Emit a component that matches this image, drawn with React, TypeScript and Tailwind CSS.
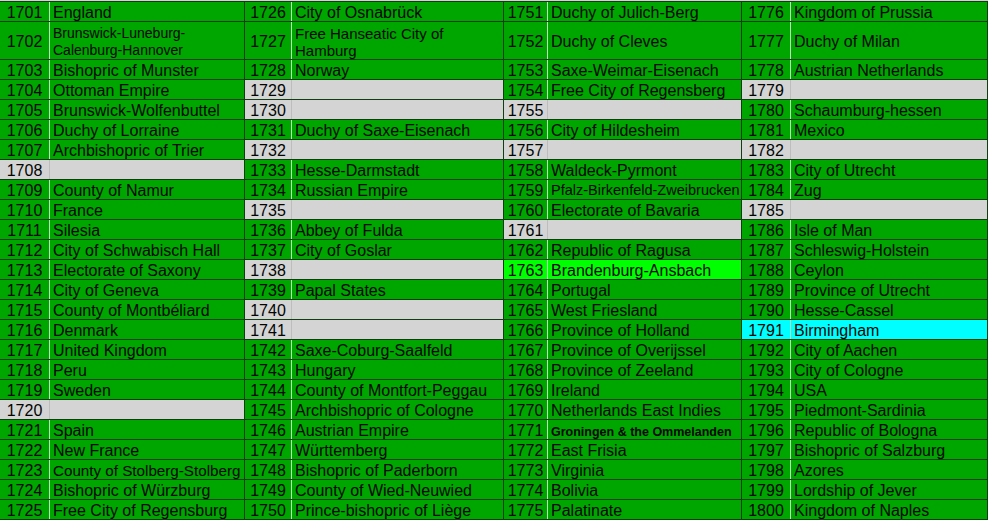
import clsx from "clsx"

type Fill = "green" | "gray" | "lime" | "cyan"

interface Entry {
  year: number
  name?: string | string[]
  fill?: Fill
  text?: string
}

interface Group {
  yearWidth: string
  width: string
  entries: Entry[]
}

const fillClass: Record<Fill, string> = {
  green: "bg-[#00a600]",
  gray: "bg-[#d4d4d4]",
  lime: "bg-[#00ff00]",
  cyan: "bg-[#00ffff]",
}

const groups: Group[] = [
  {
    width: "w-[245px]",
    yearWidth: "w-[50px]",
    entries: [
      { year: 1701, name: "England" },
      { year: 1702, name: ["Brunswick-Luneburg-", "Calenburg-Hannover"], text: "text-[14px] leading-[17px]" },
      { year: 1703, name: "Bishopric of Munster" },
      { year: 1704, name: "Ottoman Empire" },
      { year: 1705, name: "Brunswick-Wolfenbuttel" },
      { year: 1706, name: "Duchy of Lorraine" },
      { year: 1707, name: "Archbishopric of Trier" },
      { year: 1708 },
      { year: 1709, name: "County of Namur" },
      { year: 1710, name: "France" },
      { year: 1711, name: "Silesia" },
      { year: 1712, name: "City of Schwabisch Hall" },
      { year: 1713, name: "Electorate of Saxony" },
      { year: 1714, name: "City of Geneva" },
      { year: 1715, name: "County of Montbéliard" },
      { year: 1716, name: "Denmark" },
      { year: 1717, name: "United Kingdom" },
      { year: 1718, name: "Peru" },
      { year: 1719, name: "Sweden" },
      { year: 1720 },
      { year: 1721, name: "Spain" },
      { year: 1722, name: "New France" },
      { year: 1723, name: "County of Stolberg-Stolberg", text: "text-[15.2px] leading-[19px]" },
      { year: 1724, name: "Bishopric of Würzburg" },
      { year: 1725, name: "Free City of Regensburg" },
    ],
  },
  {
    width: "w-[259px]",
    yearWidth: "w-[47px]",
    entries: [
      { year: 1726, name: "City of Osnabrück" },
      { year: 1727, name: ["Free Hanseatic City of", "Hamburg"], text: "text-[15px] leading-[17px]" },
      { year: 1728, name: "Norway" },
      { year: 1729 },
      { year: 1730 },
      { year: 1731, name: "Duchy of Saxe-Eisenach" },
      { year: 1732 },
      { year: 1733, name: "Hesse-Darmstadt" },
      { year: 1734, name: "Russian Empire" },
      { year: 1735 },
      { year: 1736, name: "Abbey of Fulda" },
      { year: 1737, name: "City of Goslar" },
      { year: 1738 },
      { year: 1739, name: "Papal States" },
      { year: 1740 },
      { year: 1741 },
      { year: 1742, name: "Saxe-Coburg-Saalfeld" },
      { year: 1743, name: "Hungary" },
      { year: 1744, name: "County of Montfort-Peggau" },
      { year: 1745, name: "Archbishopric of Cologne" },
      { year: 1746, name: "Austrian Empire" },
      { year: 1747, name: "Württemberg" },
      { year: 1748, name: "Bishopric of Paderborn" },
      { year: 1749, name: "County of Wied-Neuwied" },
      { year: 1750, name: "Prince-bishopric of Liège" },
    ],
  },
  {
    width: "w-[238px]",
    yearWidth: "w-[44px]",
    entries: [
      { year: 1751, name: "Duchy of Julich-Berg" },
      { year: 1752, name: "Duchy of Cleves" },
      { year: 1753, name: "Saxe-Weimar-Eisenach" },
      { year: 1754, name: "Free City of Regensberg" },
      { year: 1755 },
      { year: 1756, name: "City of Hildesheim" },
      { year: 1757 },
      { year: 1758, name: "Waldeck-Pyrmont" },
      { year: 1759, name: "Pfalz-Birkenfeld-Zweibrucken", text: "text-[14.5px] leading-[19px]" },
      { year: 1760, name: "Electorate of Bavaria" },
      { year: 1761 },
      { year: 1762, name: "Republic of Ragusa" },
      { year: 1763, name: "Brandenburg-Ansbach", fill: "lime" },
      { year: 1764, name: "Portugal" },
      { year: 1765, name: "West Friesland" },
      { year: 1766, name: "Province of Holland" },
      { year: 1767, name: "Province of Overijssel" },
      { year: 1768, name: "Province of Zeeland" },
      { year: 1769, name: "Ireland" },
      { year: 1770, name: "Netherlands East Indies" },
      { year: 1771, name: "Groningen & the Ommelanden", text: "text-[12.5px] font-bold leading-[19px] pt-[3px]" },
      { year: 1772, name: "East Frisia" },
      { year: 1773, name: "Virginia" },
      { year: 1774, name: "Bolivia" },
      { year: 1775, name: "Palatinate" },
    ],
  },
  {
    width: "w-[246px]",
    yearWidth: "w-[49px]",
    entries: [
      { year: 1776, name: "Kingdom of Prussia" },
      { year: 1777, name: "Duchy of Milan" },
      { year: 1778, name: "Austrian Netherlands" },
      { year: 1779 },
      { year: 1780, name: "Schaumburg-hessen" },
      { year: 1781, name: "Mexico" },
      { year: 1782 },
      { year: 1783, name: "City of Utrecht" },
      { year: 1784, name: "Zug" },
      { year: 1785 },
      { year: 1786, name: "Isle of Man" },
      { year: 1787, name: "Schleswig-Holstein" },
      { year: 1788, name: "Ceylon" },
      { year: 1789, name: "Province of Utrecht" },
      { year: 1790, name: "Hesse-Cassel" },
      { year: 1791, name: "Birmingham", fill: "cyan" },
      { year: 1792, name: "City of Aachen" },
      { year: 1793, name: "City of Cologne" },
      { year: 1794, name: "USA" },
      { year: 1795, name: "Piedmont-Sardinia" },
      { year: 1796, name: "Republic of Bologna" },
      { year: 1797, name: "Bishopric of Salzburg" },
      { year: 1798, name: "Azores" },
      { year: 1799, name: "Lordship of Jever" },
      { year: 1800, name: "Kingdom of Naples" },
    ],
  },
]

const Row = ({ entry, index, yearWidth }: { entry: Entry; index: number; yearWidth: string }) => {
  const fill: Fill = entry.fill ?? (entry.name ? "green" : "gray")
  const lines = Array.isArray(entry.name) ? entry.name : entry.name ? [entry.name] : []

  return (
    <div
      className={clsx(
        "flex border-b border-[#123d12]",
        index === 1 ? "h-[38px]" : "h-[20px]",
        fillClass[fill]
      )}
    >
      <div
        className={clsx(
          "flex shrink-0 items-center justify-center border-r pt-[2px] leading-[19px]",
          yearWidth,
          fill === "gray" ? "border-[#bdbdbd]" : "border-[#b8e6b8]"
        )}
      >
        {entry.year}
      </div>
      <div className="flex min-w-0 flex-1 items-center overflow-hidden pl-[3px] pt-[2px]">
        {lines.length > 0 && (
          <div className={clsx("whitespace-nowrap", entry.text ?? "leading-[19px]")}>
            {lines.map((line) => (
              <div key={line}>{line}</div>
            ))}
          </div>
        )}
      </div>
    </div>
  )
}

export default function App() {
  return (
    <div className="h-[524px] w-[990px] overflow-hidden bg-white font-['Liberation_Sans',Arial,sans-serif] text-[16px] text-[#020502]">
      <div className="flex w-[988px] border-t border-[#d2d2d2]">
        {groups.map((group) => (
          <div key={group.entries[0].year} className={clsx("shrink-0 border-r border-t border-[#123d12]", group.width)}>
            {group.entries.map((entry, i) => (
              <Row key={entry.year} entry={entry} index={i} yearWidth={group.yearWidth} />
            ))}
          </div>
        ))}
      </div>
    </div>
  )
}
